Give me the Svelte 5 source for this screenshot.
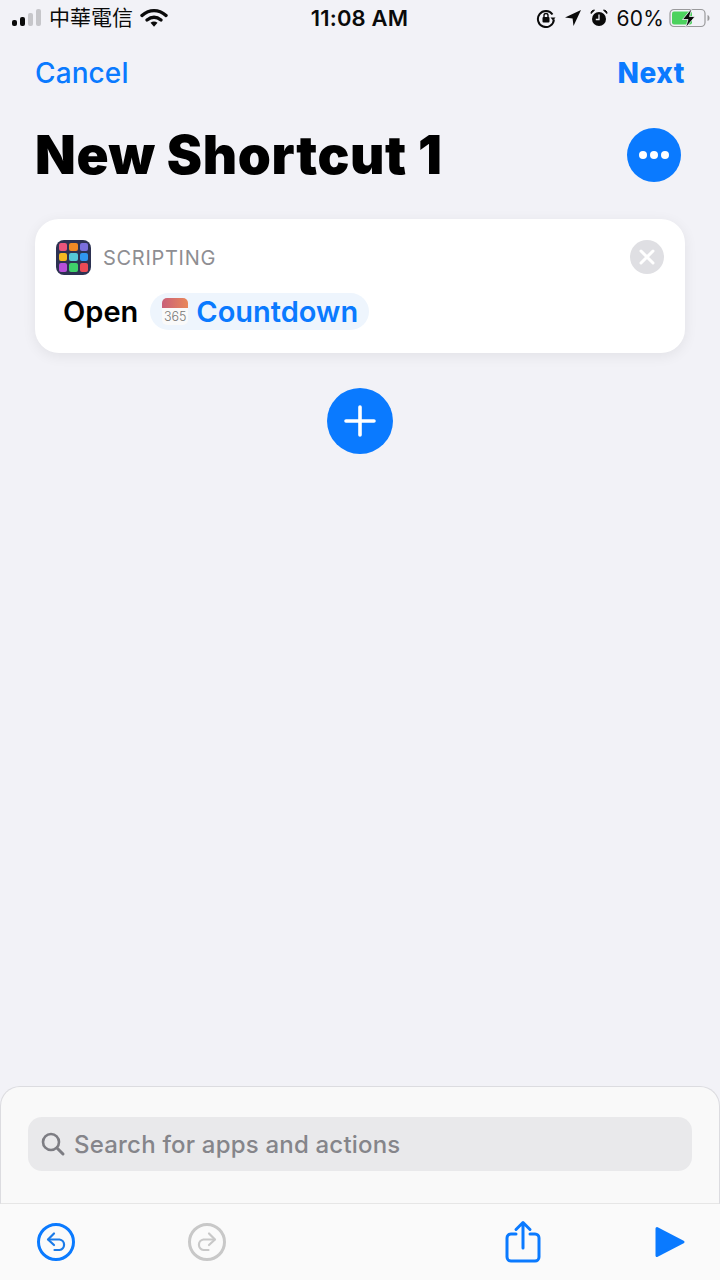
<script>
  const dots = ["#e9557c", "#f08a24", "#7b6fdc", "#f5b921", "#55c9d6", "#2f96f0", "#b84fd8", "#3fcf6a", "#ec4a55"];
</script>

<div class="screen">
  <div class="status">
    <div class="st-left">
      <svg class="signal" width="30" height="20" viewBox="0 0 30 20">
        <rect x="1" y="12" width="5" height="6" rx="2" fill="#0a0a0a" />
        <rect x="9" y="9" width="5" height="9" rx="2" fill="#0a0a0a" />
        <rect x="17" y="5" width="5" height="13" rx="2" fill="#c6c6ca" />
        <rect x="25" y="1" width="5" height="17" rx="2" fill="#c6c6ca" />
      </svg>
      <span class="carrier">中華電信</span>
      <svg class="wifi" width="28" height="20" viewBox="0 0 28 20">
        <path d="M2 7.5C9.5 1 18.500 1 26 7.500" fill="none" stroke="#0a0a0a" stroke-width="3.400" stroke-linecap="round" />
        <path d="M7 12C11.500 8.500 16.500 8.500 21 12" fill="none" stroke="#0a0a0a" stroke-width="3.400" stroke-linecap="round" />
        <path d="M10.500 14.800C12.800 13 15.200 13 17.500 14.800L14 18.800Z" fill="#0a0a0a" />
      </svg>
    </div>
    <div class="time">11:08 AM</div>
    <div class="st-right">
      <svg width="20" height="20" viewBox="0 0 20 20">
        <path d="M16.500 6.500A8 8 0 1 0 17.900 11.500" fill="none" stroke="#0a0a0a" stroke-width="2" />
        <path d="M14.500 9.500L19.500 9.500L17 12.500Z" fill="#0a0a0a" />
        <rect x="6.500" y="9" width="7" height="5.500" rx="1" fill="#0a0a0a" />
        <path d="M8 9.500V7.500A2 2 0 0 1 12 7.500V9.500" fill="none" stroke="#0a0a0a" stroke-width="1.400" />
      </svg>
      <svg class="arrow" width="18" height="18" viewBox="0 0 18 18">
        <path d="M17 1L1 8.500L8.600 9.400L9.500 17Z" fill="#0a0a0a" />
      </svg>
      <svg class="alarm" width="18" height="20" viewBox="0 0 18 20">
        <circle cx="9" cy="11" r="7" fill="#0a0a0a" />
        <path d="M1 5.500L4.500 2.200A3 3 0 0 0 1 5.500ZM17 5.500L13.500 2.200A3 3 0 0 1 17 5.500Z" fill="#0a0a0a" stroke="#0a0a0a" />
        <path d="M9 6.500V11.500H5.800" fill="none" stroke="#f2f2f7" stroke-width="1.300" />
      </svg>
      <span class="pct">60%</span>
      <svg class="battery" width="42" height="22" viewBox="0 0 42 22">
        <rect x="1" y="2.500" width="35" height="17" rx="4" fill="none" stroke="#9a9a9c" stroke-width="1.200" />
        <rect x="3" y="4.500" width="20" height="13" rx="2" fill="#4cd25e" />
        <path d="M38.500 8V14C40 13.500 40.500 12.500 40.500 11C40.500 9.500 40 8.500 38.500 8Z" fill="#9a9a9c" />
        <path d="M23 1L13.500 12.500H19L16.500 21L26 9.500H20.500Z" fill="#0a0a0a" stroke="#f2f2f7" stroke-width="0.800" />
      </svg>
    </div>
  </div>

  <div class="nav">
    <span class="cancel">Cancel</span>
    <span class="next">Next</span>
  </div>

  <div class="title-row">
    <h1>New Shortcut 1</h1>
    <div class="more"><i></i><i></i><i></i></div>
  </div>

  <div class="card">
    <div class="card-head">
      <div class="app-icon">
        {#each dots as c}
          <span style="background:{c}"></span>
        {/each}
      </div>
      <span class="cat">SCRIPTING</span>
      <div class="close">
        <svg width="18" height="18" viewBox="0 0 18 18">
          <path d="M3 3L15 15M15 3L3 15" stroke="#fff" stroke-width="3" stroke-linecap="round" />
        </svg>
      </div>
    </div>
    <div class="card-body">
      <span class="open">Open</span>
      <span class="pill">
        <span class="cal">
          <span class="cal-top"></span>
          <span class="cal-num">365</span>
        </span>
        <span class="pill-text">Countdown</span>
      </span>
    </div>
  </div>

  <div class="add-wrap">
    <div class="add">
      <svg width="32" height="32" viewBox="0 0 32 32">
        <path d="M16 2V30M2 16H30" stroke="#fff" stroke-width="3.600" stroke-linecap="round" />
      </svg>
    </div>
  </div>

  <div class="spacer"></div>

  <div class="sheet">
    <div class="search">
      <svg width="26" height="26" viewBox="0 0 26 26">
        <circle cx="11" cy="11" r="8" fill="none" stroke="#7d7d83" stroke-width="2.600" />
        <path d="M17 17L23 23" stroke="#7d7d83" stroke-width="3" stroke-linecap="round" />
      </svg>
      <span>Search for apps and actions</span>
    </div>
  </div>

  <div class="toolbar">
    <svg width="40" height="40" viewBox="0 0 40 40">
      <circle cx="20" cy="20" r="17.500" fill="none" stroke="#0a7aff" stroke-width="3" />
      <path d="M18 11.500L12 17.500L18 23" fill="none" stroke="#1a7ae8" stroke-width="2.200" stroke-linecap="round" stroke-linejoin="round" />
      <path d="M12.500 17.500H23.500A5.300 5.300 0 0 1 23.500 28H18.500" fill="none" stroke="#1a7ae8" stroke-width="2.200" stroke-linecap="round" />
    </svg>
    <svg class="redo" width="40" height="40" viewBox="0 0 40 40">
      <circle cx="20" cy="20" r="17.500" fill="none" stroke="#c8c8c8" stroke-width="3" />
      <path d="M22 11.500L28 17.500L22 23" fill="none" stroke="#c8c8c8" stroke-width="2.200" stroke-linecap="round" stroke-linejoin="round" />
      <path d="M27.500 17.500H16.500A5.300 5.300 0 0 0 16.500 28H21.500" fill="none" stroke="#c8c8c8" stroke-width="2.200" stroke-linecap="round" />
    </svg>
    <svg class="share" width="36" height="44" viewBox="0 0 36 44">
      <path d="M11 14H6A4 4 0 0 0 2 18V37A4 4 0 0 0 6 41H30A4 4 0 0 0 34 37V18A4 4 0 0 0 30 14H25" fill="none" stroke="#0a7aff" stroke-width="3" stroke-linecap="round" />
      <path d="M18 28V3M11 9.500L18 2.500L25 9.500" fill="none" stroke="#0a7aff" stroke-width="3" stroke-linecap="round" stroke-linejoin="round" />
    </svg>
    <svg class="play" width="32" height="34" viewBox="0 0 32 34">
      <path d="M3 3.500L29 17L3 30.500Z" fill="#0a7aff" stroke="#0a7aff" stroke-width="3" stroke-linejoin="round" />
    </svg>
  </div>
</div>

<style>
  :global(body) {
    margin: 0;
    background: #f2f2f7;
  }
  .screen {
    width: 720px;
    height: 1280px;
    display: flex;
    flex-direction: column;
    background: #f2f2f7;
    font-family: Inter, "Noto Sans CJK TC", sans-serif;
    overflow: hidden;
  }
  .status {
    height: 36px;
    display: grid;
    grid-template-columns: 1fr auto 1fr;
    align-items: center;
    color: #0a0a0a;
    padding: 0 9px 0 11px;
  }
  .st-left {
    display: flex;
    align-items: center;
    gap: 8px;
  }
  .carrier {
    font-size: 21px;
    line-height: 24px;
  }
  .wifi {
    margin-left: -1px;
  }
  .time {
    font-size: 22px;
    font-weight: 600;
    letter-spacing: 0.2px;
    margin-right: 3px;
  }
  .st-right {
    display: flex;
    align-items: center;
    justify-content: flex-end;
    gap: 8px;
  }
  .pct {
    font-size: 21px;
    letter-spacing: 0.2px;
    margin-left: 1px;
    margin-right: -3px;
  }
  .nav {
    display: flex;
    justify-content: space-between;
    padding: 18px 35px 0;
    font-size: 28px;
    line-height: 38px;
    color: #0a7aff;
  }
  .cancel {
    font-weight: 500;
    letter-spacing: 0.1px;
  }
  .next {
    font-weight: 800;
    letter-spacing: 0.5px;
  }
  .title-row {
    display: flex;
    align-items: center;
    justify-content: space-between;
    padding: 0 39px 0 35px;
    margin-top: 28px;
    height: 70px;
  }
  h1 {
    margin: 0;
    font-size: 53px;
    font-weight: 900;
    color: #000;
    letter-spacing: 0.6px;
    line-height: 60px;
  }
  .more {
    width: 54px;
    height: 54px;
    border-radius: 50%;
    background: #0a7aff;
    display: flex;
    align-items: center;
    justify-content: center;
    gap: 3px;
  }
  .more i {
    width: 8px;
    height: 8px;
    border-radius: 50%;
    background: #fff;
  }
  .card {
    margin: 29px 35px 0;
    height: 134px;
    box-sizing: border-box;
    background: #fff;
    border-radius: 24px;
    box-shadow: 0 3px 14px rgba(0, 0, 0, 0.07);
    padding: 20px 21px 0;
  }
  .card-head {
    display: flex;
    align-items: center;
    height: 36px;
  }
  .app-icon {
    width: 35px;
    height: 35px;
    box-sizing: border-box;
    border-radius: 8px;
    background: #2d3252;
    display: grid;
    grid-template-columns: repeat(3, 1fr);
    gap: 2px;
    padding: 3px;
  }
  .app-icon span {
    border-radius: 2px;
  }
  .cat {
    margin-left: 12px;
    font-size: 20px;
    color: #8e8e92;
    letter-spacing: 0.7px;
    padding-top: 2px;
  }
  .close {
    margin-left: auto;
    width: 34px;
    height: 34px;
    border-radius: 50%;
    background: #dfdfe3;
    display: flex;
    align-items: center;
    justify-content: center;
  }
  .card-body {
    display: flex;
    align-items: center;
    margin-top: 18px;
    padding-left: 7px;
  }
  .open {
    font-size: 29px;
    font-weight: 600;
    color: #000;
  }
  .pill {
    margin-left: 12px;
    height: 37px;
    border-radius: 19px;
    background: #eef5fd;
    display: flex;
    align-items: center;
    padding: 0 11px 0 12px;
  }
  .cal {
    width: 26px;
    height: 27px;
    display: flex;
    flex-direction: column;
    border-radius: 5px;
    overflow: hidden;
    background: #fafafa;
  }
  .cal-top {
    height: 10px;
    background: linear-gradient(90deg, #c9607a, #e9885a);
  }
  .cal-num {
    font-size: 12.500px;
    font-weight: 300;
    line-height: 17px;
    text-align: center;
    color: #777;
  }
  .pill-text {
    margin-left: 8px;
    font-size: 29px;
    font-weight: 600;
    color: #0a7aff;
  }
  .add-wrap {
    display: flex;
    justify-content: center;
    margin-top: 35px;
  }
  .add {
    width: 66px;
    height: 66px;
    border-radius: 50%;
    background: #0a7aff;
    display: flex;
    align-items: center;
    justify-content: center;
  }
  .spacer {
    flex: 1;
  }
  .sheet {
    height: 118px;
    box-sizing: border-box;
    background: #f9f9f9;
    border-radius: 20px 20px 0 0;
    border: 1px solid #dcdce0;
    border-bottom: 1px solid #e6e6e6;
    padding: 30px 27px 0;
  }
  .search {
    height: 54px;
    background: #e9e9eb;
    border-radius: 14px;
    display: flex;
    align-items: center;
    padding-left: 12px;
    gap: 8px;
    font-size: 24px;
    font-weight: 500;
    letter-spacing: 0.2px;
    color: #85858a;
  }
  .toolbar {
    height: 76px;
    background: #fafafa;
    position: relative;
    display: flex;
    align-items: center;
    padding-left: 36px;
  }
  .redo {
    margin-left: 111px;
  }
  .share {
    margin-left: 278px;
  }
  .play {
    margin-left: 113px;
  }
</style>
